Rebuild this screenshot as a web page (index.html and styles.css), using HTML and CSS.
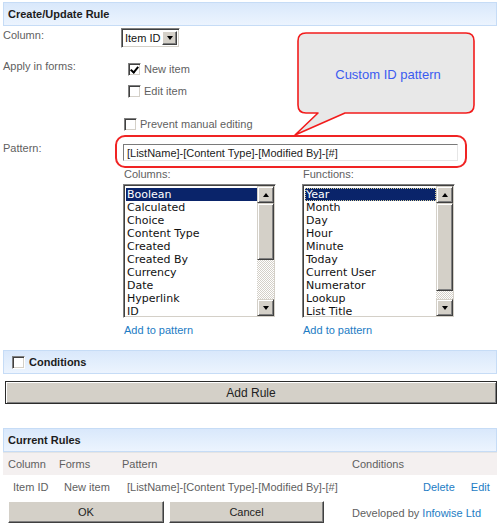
FILE: index.html
```html
<!DOCTYPE html>
<html lang="en">
<head>
    <meta charset="UTF-8">
    <title>Create/Update Rule</title>
    <link rel="stylesheet" href="styles.css">
</head>
<body>
    <div class="page">
        <div class="section-head">Create/Update Rule</div>

        <div class="form-row row-column">
            <div class="label">Column:</div>
            <div class="field">
                <span class="dropdown">
                    <span class="dropdown-text">Item ID</span>
                    <span class="dropdown-btn"><span class="arrow-down"></span></span>
                </span>
            </div>
        </div>

        <div class="form-row row-forms">
            <div class="label">Apply in forms:</div>
            <div class="field">
                <label class="check"><span class="box checked"></span>New item</label>
                <label class="check"><span class="box"></span>Edit item</label>
                <label class="check check-prevent"><span class="box"></span>Prevent manual editing</label>
            </div>
        </div>

        <div class="form-row row-pattern">
            <div class="label">Pattern:</div>
            <div class="field">
                <div class="highlight">
                    <input class="text-input" type="text" value="[ListName]-[Content Type]-[Modified By]-[#]">
                </div>
            </div>
        </div>

        <div class="form-row row-lists">
            <div class="label"></div>
            <div class="field lists">
                <div class="list-group">
                    <div class="group-label">Columns:</div>
                    <div class="listbox">
                        <ul class="items">
                            <li class="selected">Boolean</li>
                            <li>Calculated</li>
                            <li>Choice</li>
                            <li>Content Type</li>
                            <li>Created</li>
                            <li>Created By</li>
                            <li>Currency</li>
                            <li>Date</li>
                            <li>Hyperlink</li>
                            <li>ID</li>
                        </ul>
                        <div class="scrollbar">
                            <span class="sb-btn"><span class="arrow-up"></span></span>
                            <span class="sb-thumb thumb-short"></span>
                            <span class="sb-track"></span>
                            <span class="sb-btn"><span class="arrow-down"></span></span>
                        </div>
                    </div>
                    <a class="link add-link" href="#">Add to pattern</a>
                </div>
                <div class="list-group">
                    <div class="group-label">Functions:</div>
                    <div class="listbox">
                        <ul class="items">
                            <li class="selected focused">Year</li>
                            <li>Month</li>
                            <li>Day</li>
                            <li>Hour</li>
                            <li>Minute</li>
                            <li>Today</li>
                            <li>Current User</li>
                            <li>Numerator</li>
                            <li>Lookup</li>
                            <li>List Title</li>
                        </ul>
                        <div class="scrollbar">
                            <span class="sb-btn"><span class="arrow-up"></span></span>
                            <span class="sb-thumb thumb-long"></span>
                            <span class="sb-track"></span>
                            <span class="sb-btn"><span class="arrow-down"></span></span>
                        </div>
                    </div>
                    <a class="link add-link" href="#">Add to pattern</a>
                </div>
            </div>
        </div>

        <div class="section-head head-conditions">
            <span class="box"></span>Conditions
        </div>

        <button class="add-rule" type="button">Add Rule</button>

        <div class="section-head head-rules">Current Rules</div>

        <div class="rules">
            <div class="rules-row rules-head">
                <span>Column</span>
                <span>Forms</span>
                <span>Pattern</span>
                <span>Conditions</span>
                <span></span>
            </div>
            <div class="rules-row rules-data">
                <span>Item ID</span>
                <span>New item</span>
                <span>[ListName]-[Content Type]-[Modified By]-[#]</span>
                <span></span>
                <span class="actions"><a class="link" href="#">Delete</a><a class="link" href="#">Edit</a></span>
            </div>
        </div>

        <div class="footer">
            <button class="btn btn-ok" type="button">OK</button>
            <button class="btn btn-cancel" type="button">Cancel</button>
            <span class="credit">Developed by <a class="link" href="#">Infowise Ltd</a></span>
        </div>

        <!-- annotation callout over the form -->
        <svg class="callout" width="500" height="140" viewBox="0 0 500 140">
            <path d="M306 33 H466 Q474 33 474 41 V105 Q474 113 466 113 H345 L295 135 L318 113 H306 Q298 113 298 105 V41 Q298 33 306 33 Z"
                  fill="#e8e8e8" stroke="#f21c1c" stroke-width="1.6" stroke-linejoin="round"/>
            <text x="388" y="79" text-anchor="middle" class="callout-text">Custom ID pattern</text>
        </svg>
    </div>
</body>
</html>
```

FILE: styles.css
```css
* {
    margin: 0;
    padding: 0;
    box-sizing: border-box;
}

body {
    background: #fff;
    font-family: 'Liberation Sans', Arial, sans-serif;
    font-size: 11px;
    color: #5f5f5f;
}

.page {
    position: relative;
    width: 500px;
    height: 530px;
    padding: 2px 3px 0 3px;
}

.section-head {
    display: flex;
    align-items: center;
    height: 24px;
    padding-left: 4px;
    border: 1px solid #c6dcf6;
    background: linear-gradient(#d9e8fb, #ecf4fe);
    color: #1c1c1c;
    font-weight: bold;
    font-size: 11px;
}

/* form rows */
.form-row {
    display: grid;
    grid-template-columns: 118px 1fr;
}

.label {
    line-height: 14px;
}

.row-column {
    height: 30px;
}

.row-column .label {
    padding-top: 2px;
}

.row-column .field {
    padding-top: 2px;
}

.row-forms {
    height: 79px;
}

.row-forms .label {
    padding-top: 3px;
}

.row-forms .field {
    padding-top: 2px;
}

.row-pattern {
    height: 33px;
}

.row-pattern .label {
    padding-top: 6px;
}

/* dropdown */
.dropdown {
    display: inline-flex;
    align-items: center;
    width: 59px;
    height: 20px;
    border: 1px solid;
    border-color: #808080 #fff #fff #808080;
    box-shadow: inset 1px 1px #404040, inset -1px -1px #d4d0c8;
    background: #fff;
    padding: 2px;
    white-space: nowrap;
}

.dropdown-text {
    flex: 1;
    color: #111;
    padding-left: 1px;
}

.dropdown-btn {
    width: 15px;
    height: 14px;
    display: flex;
    align-items: center;
    justify-content: center;
    background: #d4d0c8;
    border: 1px solid;
    border-color: #fff #404040 #404040 #fff;
    box-shadow: inset -1px -1px #808080;
}

.arrow-down,
.arrow-up {
    width: 0;
    height: 0;
    border-left: 3.5px solid transparent;
    border-right: 3.5px solid transparent;
}

.arrow-down {
    border-top: 4px solid #000;
}

.arrow-up {
    border-bottom: 4px solid #000;
}

/* checkboxes */
.check {
    display: flex;
    align-items: center;
    height: 22px;
    padding-left: 7px;
    gap: 3px;
}

.check-prevent {
    margin-top: 11px;
    padding-left: 3px;
}

.box {
    display: inline-block;
    position: relative;
    width: 13px;
    height: 13px;
    background: #fff;
    border: 1px solid;
    border-color: #808080 #fff #fff #808080;
    box-shadow: inset 1px 1px #404040, inset -1px -1px #d4d0c8;
}

.box.checked::after {
    content: "";
    position: absolute;
    left: 3px;
    top: 1px;
    width: 3px;
    height: 6px;
    border: solid #000;
    border-width: 0 2px 2px 0;
    transform: rotate(40deg);
}

/* pattern */
.highlight {
    width: 352px;
    height: 33px;
    margin-left: -6px;
    padding: 7px 0 0 6px;
    border: 2px solid #f02424;
    border-radius: 10px;
}

.text-input {
    display: block;
    width: 335px;
    height: 17px;
    border: 1px solid;
    border-color: #7a7a7a #e6e6e6 #e6e6e6 #7a7a7a;
    padding: 0 3px;
    font-family: 'Liberation Sans', Arial, sans-serif;
    font-size: 11px;
    color: #222;
    outline: none;
}

/* list boxes */
.lists {
    display: flex;
    gap: 26px;
    padding-left: 2px;
}

.group-label {
    height: 16px;
    line-height: 12px;
    padding-left: 1px;
}

.listbox {
    display: flex;
    width: 153px;
    height: 134px;
    border: 1px solid;
    border-color: #808080 #fff #fff #808080;
    box-shadow: inset 1px 1px #404040, inset -1px -1px #d4d0c8;
    padding: 2px 1px 1px 2px;
    background: #fff;
}

.items {
    flex: 1;
    list-style: none;
    font-family: 'DejaVu Sans', Verdana, sans-serif;
    font-size: 11px;
    line-height: 13px;
    color: #111;
    padding-top: 1px;
}

.items li {
    padding-left: 1px;
    white-space: nowrap;
}

.items .selected {
    background: #0a246a;
    color: #fff;
}

.items .focused {
    outline: 1px dotted #d6cf9a;
    outline-offset: -1px;
}

.scrollbar {
    display: flex;
    flex-direction: column;
    width: 17px;
    margin-top: -1px;
}

.sb-btn,
.sb-thumb {
    display: flex;
    align-items: center;
    justify-content: center;
    background: #d4d0c8;
    border: 1px solid;
    border-color: #d4d0c8 #404040 #404040 #d4d0c8;
    box-shadow: inset 1px 1px #fff, inset -1px -1px #808080;
}

.sb-btn {
    height: 17px;
}

.thumb-short {
    height: 57px;
}

.thumb-long {
    height: 88px;
}

.sb-track {
    flex: 1;
    background: repeating-conic-gradient(#d4d0c8 0 25%, #fff 0 50%) 0 0 / 2px 2px;
}

.link {
    color: #1d7cc4;
    text-decoration: none;
}

.add-link {
    display: block;
    margin-top: 5px;
    line-height: 14px;
    padding-left: 1px;
}

/* conditions + add */
.head-conditions {
    margin-top: 13px;
    gap: 4px;
    padding-left: 8px;
}

.add-rule {
    display: block;
    width: 492px;
    height: 23px;
    margin: 7px 0 0 2px;
    background: #d4d0c8;
    border: 1px solid #2b2b2b;
    box-shadow: inset 1px 1px #fff, inset -1px -1px #808080;
    font-family: 'Liberation Sans', Arial, sans-serif;
    font-size: 12px;
    color: #222;
}

.head-rules {
    margin-top: 24px;
}

/* current rules table */
.rules-row {
    display: grid;
    grid-template-columns: 51px 63px 230px 66px 1fr;
    align-items: center;
    padding-left: 5px;
}

.rules-head {
    height: 23px;
    background: #f4f0f0;
    border-top: 1px solid #e4e4e4;
}

.rules-data {
    height: 24px;
}

.rules-data span {
    padding-left: 5px;
    white-space: nowrap;
}

.actions {
    display: flex;
    gap: 16px;
}

/* footer */
.footer {
    display: flex;
    align-items: center;
    gap: 5px;
    padding-left: 5px;
    margin-top: 2px;
}

.btn {
    height: 22px;
    background: #d4d0c8;
    border: 1px solid;
    border-color: #fff #404040 #404040 #fff;
    box-shadow: inset -1px -1px #808080;
    font-family: 'Liberation Sans', Arial, sans-serif;
    font-size: 11px;
    color: #222;
}

.btn-ok {
    width: 156px;
}

.btn-cancel {
    width: 155px;
}

.credit {
    margin-left: 23px;
    padding-top: 2px;
}

/* annotation */
.callout {
    position: absolute;
    left: 0;
    top: 0;
    pointer-events: none;
}

.callout-text {
    font-family: 'Liberation Sans', Arial, sans-serif;
    font-size: 13px;
    fill: #3b5bf0;
}
```
